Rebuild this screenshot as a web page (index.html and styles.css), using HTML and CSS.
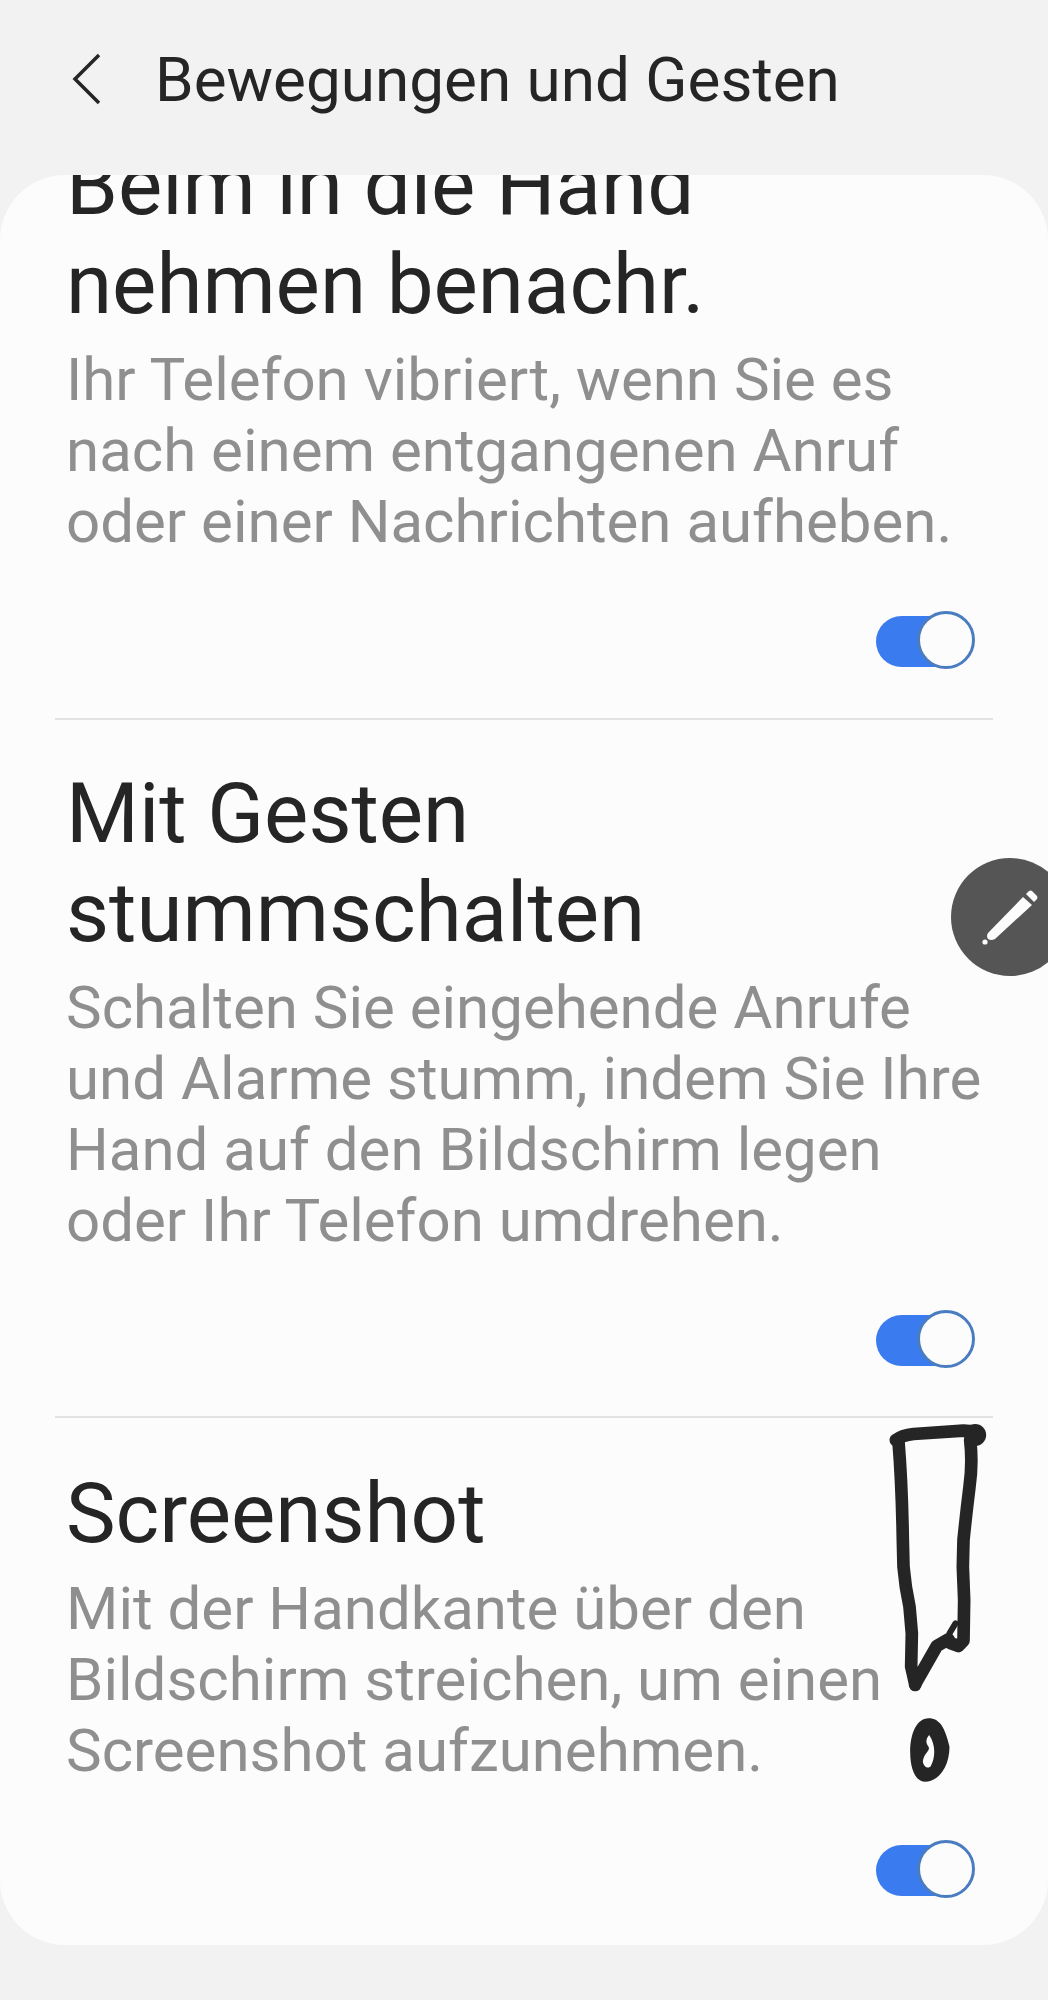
FILE: index.html
```html
<!DOCTYPE html>
<html lang="de">
<head>
    <meta charset="UTF-8">
    <title>Bewegungen und Gesten</title>
    <link rel="stylesheet" href="styles.css">
</head>
<body>

<div class="screen">
    <header class="topbar">
        <svg class="back" viewBox="0 0 30 52"><path d="M27 2 L3 26 L27 50"/></svg>
        <h1 class="topbar-title">Bewegungen und Gesten</h1>
    </header>

    <main class="card">
        <div class="list">
            <section class="row row-first">
                <h2 class="row-title">Beim in die Hand<br>nehmen benachr.</h2>
                <p class="row-text">Ihr Telefon vibriert, wenn Sie es<br>nach einem entgangenen Anruf<br>oder einer Nachrichten aufheben.</p>
                <div class="toggle"><span class="knob"></span></div>
            </section>
            <section class="row">
                <h2 class="row-title">Mit Gesten<br>stummschalten</h2>
                <p class="row-text">Schalten Sie eingehende Anrufe<br>und Alarme stumm, indem Sie Ihre<br>Hand auf den Bildschirm legen<br>oder Ihr Telefon umdrehen.</p>
                <div class="toggle"><span class="knob"></span></div>
            </section>
            <section class="row row-last">
                <h2 class="row-title">Screenshot</h2>
                <p class="row-text">Mit der Handkante über den<br>Bildschirm streichen, um einen<br>Screenshot aufzunehmen.</p>
                <div class="toggle"><span class="knob"></span></div>
            </section>
        </div>
    </main>

    <!-- floating edit button -->
    <div class="fab">
        <svg viewBox="0 0 118 118" class="fab-icon">
            <path class="pencil" d="M37 75 L72 39 L81 47 L44 81 Q40 83 37 81 Q35 78 37 75 Z"/>
            <path class="pencil" d="M75 36 L78 33 Q80 32 81 33 L86 38 Q87 40 86 41 L83 44 Z"/>
            <circle class="pencil" cx="34" cy="84" r="2.6"/>
        </svg>
    </div>

    <!-- hand drawn marker on top of the screenshot -->
    <svg class="scribble" viewBox="0 0 563 1200">
        <path class="ink" d="M107 120 Q125 106 160 102 L310 92 L345 95"/>
        <circle class="ink-fill" cx="345" cy="105" r="33"/>
        <path class="ink" d="M115 125 C122 210 126 300 128 420 L130 500 Q135 560 148 620 L155 700 L153 800 L165 852 L230 738 L265 718 L272 730 L295 738 L310 722 L312 600 L308 500 L310 420 Q318 340 328 260 Q338 190 330 120"/>
        <circle class="ink-fill" cx="165" cy="855" r="19"/>
        <path class="ink ink-thin" d="M268 700 L286 670"/>
        <path class="ink-fill" fill-rule="evenodd" d="M205 955 C240 955 255 985 268 1040 C268 1100 235 1145 195 1145 C165 1145 150 1105 150 1055 C150 1000 170 955 205 955 Z M207 1005 C198 1015 195 1028 205 1040 C212 1052 190 1060 188 1085 C190 1100 205 1108 212 1098 C225 1075 228 1035 207 1005 Z"/>
    </svg>
</div>

</body>
</html>
```

FILE: styles.css
```css
html, body {
    margin: 0;
    padding: 0;
}
body {
    background: #f2f2f2;
    font-family: Roboto, "Liberation Sans", sans-serif;
}
.screen {
    position: relative;
    width: 1048px;
    height: 2000px;
    overflow: hidden;
    background: #f2f2f2;
}

.topbar {
    height: 175px;
    box-sizing: border-box;
    padding: 50px 0 0 72px;
    display: flex;
    align-items: flex-start;
}
.back {
    width: 30px;
    height: 52px;
    margin-top: 3px;
    margin-right: 53px;
    fill: none;
    stroke: #252525;
    stroke-width: 3.5;
}
.topbar-title {
    margin: 0;
    font-size: 62px;
    line-height: 60px;
    font-weight: 400;
    color: #252525;
}

.card {
    height: 1770px;
    background: #fcfcfc;
    border-radius: 65px;
    overflow: hidden;
}
.list {
    margin-top: -39px;
    padding: 0 55px;
}
.row {
    border-top: 2px solid #e3e3e3;
    padding: 44px 0 0 11px;
    height: 698px;
    box-sizing: border-box;
}
.row-first {
    border-top: 0;
    height: 582px;
    padding-top: 0;
}
.row-last {
    height: auto;
    padding-top: 46px;
}
.row-title {
    margin: 0;
    font-size: 83.5px;
    line-height: 99px;
    font-weight: 400;
    color: #252525;
}
.row-text {
    margin: 10px 0 0;
    font-size: 60px;
    line-height: 71px;
    color: #8f8f8f;
}

.toggle {
    position: relative;
    width: 90px;
    height: 51px;
    margin: 59px 0 0 810px;
    background: #3a7cf0;
    border-radius: 26px;
}
.knob {
    position: absolute;
    right: -9px;
    top: -5px;
    width: 52px;
    height: 52px;
    border: 3px solid #4a7cc0;
    border-radius: 50%;
    background: #fcfcfc;
}

.fab {
    position: absolute;
    left: 951px;
    top: 858px;
    width: 118px;
    height: 118px;
    border-radius: 50%;
    background: #555555;
}
.fab-icon {
    display: block;
    width: 118px;
    height: 118px;
}
.pencil {
    fill: #fcfcfc;
}

.scribble {
    position: absolute;
    left: 860px;
    top: 1400px;
    width: 188px;
    height: 400px;
}
.ink {
    fill: none;
    stroke: #252525;
    stroke-width: 38;
    stroke-linecap: round;
    stroke-linejoin: round;
}
.ink-thin {
    stroke-width: 18;
}
.ink-fill {
    fill: #252525;
}
```
